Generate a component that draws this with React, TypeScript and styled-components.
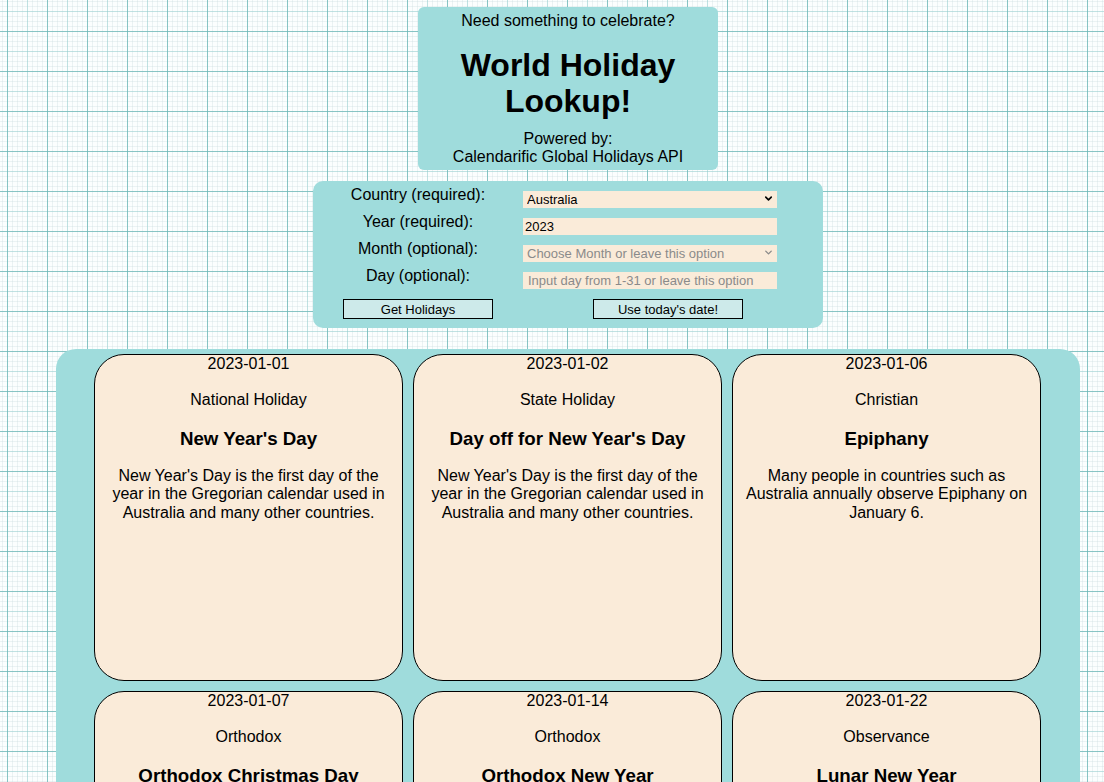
import React, { ReactElement } from 'react';
import styled, { createGlobalStyle } from 'styled-components';
import { ChevronDown } from 'lucide-react';

const Colors = {
  teal: '#9fdcdc',
  paleTeal: '#cdeaea',
  cream: '#faebd9',
  ink: '#000000',
  muted: '#8a8a8a',
};

interface Holiday {
  date: string;
  type: string;
  name: string;
  description: string;
}

const holidays: Holiday[] = [
  {
    date: '2023-01-01',
    type: 'National Holiday',
    name: "New Year's Day",
    description:
      "New Year's Day is the first day of the year in the Gregorian calendar used in Australia and many other countries.",
  },
  {
    date: '2023-01-02',
    type: 'State Holiday',
    name: "Day off for New Year's Day",
    description:
      "New Year's Day is the first day of the year in the Gregorian calendar used in Australia and many other countries.",
  },
  {
    date: '2023-01-06',
    type: 'Christian',
    name: 'Epiphany',
    description: 'Many people in countries such as Australia annually observe Epiphany on January 6.',
  },
  {
    date: '2023-01-07',
    type: 'Orthodox',
    name: 'Orthodox Christmas Day',
    description: 'Orthodox Christmas Day celebrates the birth of Jesus Christ in the Julian calendar.',
  },
  {
    date: '2023-01-14',
    type: 'Orthodox',
    name: 'Orthodox New Year',
    description: 'Orthodox New Year marks the first day of the year in the Julian calendar.',
  },
  {
    date: '2023-01-22',
    type: 'Observance',
    name: 'Lunar New Year',
    description: 'Lunar New Year is the first day of the year in the lunar calendar.',
  },
];

const GlobalStyle = createGlobalStyle`
  html, body {
    margin: 0;
    padding: 0;
  }
  body {
    font-family: "Liberation Sans", Arial, sans-serif;
    color: ${Colors.ink};
    background-color: #fbfefe;
    background-image:
      linear-gradient(90deg, rgba(105, 180, 180, 0.65) 1px, transparent 1px),
      linear-gradient(rgba(105, 180, 180, 0.65) 1px, transparent 1px),
      linear-gradient(90deg, rgba(140, 205, 205, 0.45) 1px, transparent 1px),
      linear-gradient(rgba(140, 205, 205, 0.45) 1px, transparent 1px),
      linear-gradient(90deg, rgba(205, 222, 225, 0.35) 1px, transparent 1px),
      linear-gradient(rgba(205, 222, 225, 0.35) 1px, transparent 1px);
    background-size: 40px 40px, 40px 40px, 20px 20px, 20px 20px, 5px 5px, 5px 5px;
    background-position: 7px 31px, 7px 31px, 7px 11px, 7px 11px, 2px 1px, 2px 1px;
  }
`;

const Page = styled.main`
  display: flex;
  flex-direction: column;
  align-items: center;
  width: 1024px;
  margin-left: 56px;
  padding-top: 7px;
`;

const Header = styled.header`
  width: 300px;
  box-sizing: border-box;
  padding: 5px 0 4px;
  background: ${Colors.teal};
  border-radius: 6px;
  text-align: center;
`;

const Tagline = styled.p`
  margin: 0;
  font-size: 16px;
  line-height: 18px;
`;

const Title = styled.h1`
  margin: 17px 0 11px;
  font-size: 32px;
  line-height: 36px;
  font-weight: bold;
`;

const Credit = styled.p`
  margin: 0;
  font-size: 16px;
  line-height: 18px;
`;

const Form = styled.form`
  display: grid;
  grid-template-columns: 210px 290px;
  grid-auto-rows: 27px;
  width: 510px;
  box-sizing: border-box;
  margin-top: 11px;
  padding: 5px 10px 7px 0;
  background: ${Colors.teal};
  border-radius: 10px;
`;

const Label = styled.label`
  text-align: center;
  font-size: 16px;
  line-height: 18px;
`;

const Field = styled.div`
  position: relative;
  width: 254px;
  height: 17px;
  margin-top: 4px;
`;

const Select = styled.select<{ $placeholder?: boolean }>`
  appearance: none;
  width: 100%;
  height: 100%;
  box-sizing: border-box;
  border: none;
  border-radius: 0;
  padding: 0 0 0 4px;
  background: ${Colors.cream};
  font-family: inherit;
  font-size: 13px;
  color: ${(p) => (p.$placeholder ? Colors.muted : Colors.ink)};
`;

const Caret = styled(ChevronDown)<{ $muted?: boolean }>`
  position: absolute;
  right: 3px;
  top: 3px;
  pointer-events: none;
  color: ${(p) => (p.$muted ? Colors.muted : Colors.ink)};
`;

const Input = styled.input`
  width: 100%;
  height: 100%;
  box-sizing: border-box;
  border: none;
  padding: 0 0 0 2px;
  background: ${Colors.cream};
  font-family: inherit;
  font-size: 13px;
  color: ${Colors.ink};

  &::placeholder {
    color: ${Colors.muted};
    padding-left: 3px;
  }
`;

const ButtonCell = styled.div`
  display: flex;
  justify-content: center;
  align-items: flex-start;
  padding-top: 5px;
`;

const Button = styled.button`
  width: 150px;
  height: 20px;
  padding: 0;
  border: 1px solid ${Colors.ink};
  background: ${Colors.paleTeal};
  font-family: inherit;
  font-size: 13px;
  color: ${Colors.ink};
`;

const Results = styled.section`
  display: grid;
  grid-template-columns: repeat(3, 309px);
  gap: 10px;
  width: 1024px;
  box-sizing: border-box;
  margin-top: 21px;
  padding: 5px 38px 20px;
  background: ${Colors.teal};
  border-radius: 20px;
`;

const Card = styled.article`
  height: 327px;
  box-sizing: border-box;
  padding: 0 10px;
  background: ${Colors.cream};
  border: 1px solid ${Colors.ink};
  border-radius: 30px;
  text-align: center;
  font-size: 16px;
  line-height: 18.4px;
`;

const CardDate = styled.p`
  margin: 0;
`;

const CardType = styled.p`
  margin: 17.4px 0 0;
`;

const CardName = styled.h3`
  margin: 19px 0 17px;
  font-size: 18.72px;
  line-height: 21.5px;
`;

const CardText = styled.p`
  margin: 0;
`;

const HolidayCard = ({ holiday }: { holiday: Holiday }): ReactElement => (
  <Card>
    <CardDate>{holiday.date}</CardDate>
    <CardType>{holiday.type}</CardType>
    <CardName>{holiday.name}</CardName>
    <CardText>{holiday.description}</CardText>
  </Card>
);

export default function App(): ReactElement {
  return (
    <>
      <GlobalStyle />
      <Page>
        <Header>
          <Tagline>Need something to celebrate?</Tagline>
          <Title>
            World Holiday
            <br />
            Lookup!
          </Title>
          <Credit>Powered by:</Credit>
          <Credit>Calendarific Global Holidays API</Credit>
        </Header>

        <Form onSubmit={(e) => e.preventDefault()}>
          <Label htmlFor="country">Country (required):</Label>
          <Field>
            <Select id="country" defaultValue="AU">
              <option value="AU">Australia</option>
            </Select>
            <Caret size={11} strokeWidth={3.5} />
          </Field>

          <Label htmlFor="year">Year (required):</Label>
          <Field>
            <Input id="year" defaultValue="2023" />
          </Field>

          <Label htmlFor="month">Month (optional):</Label>
          <Field>
            <Select id="month" defaultValue="" $placeholder>
              <option value="">Choose Month or leave this option</option>
            </Select>
            <Caret size={11} strokeWidth={3} $muted />
          </Field>

          <Label htmlFor="day">Day (optional):</Label>
          <Field>
            <Input id="day" placeholder="Input day from 1-31 or leave this option" />
          </Field>

          <ButtonCell>
            <Button type="submit">Get Holidays</Button>
          </ButtonCell>
          <ButtonCell>
            <Button type="button">Use today's date!</Button>
          </ButtonCell>
        </Form>

        <Results>
          {holidays.map((h) => (
            <HolidayCard key={h.date} holiday={h} />
          ))}
        </Results>
      </Page>
    </>
  );
}
